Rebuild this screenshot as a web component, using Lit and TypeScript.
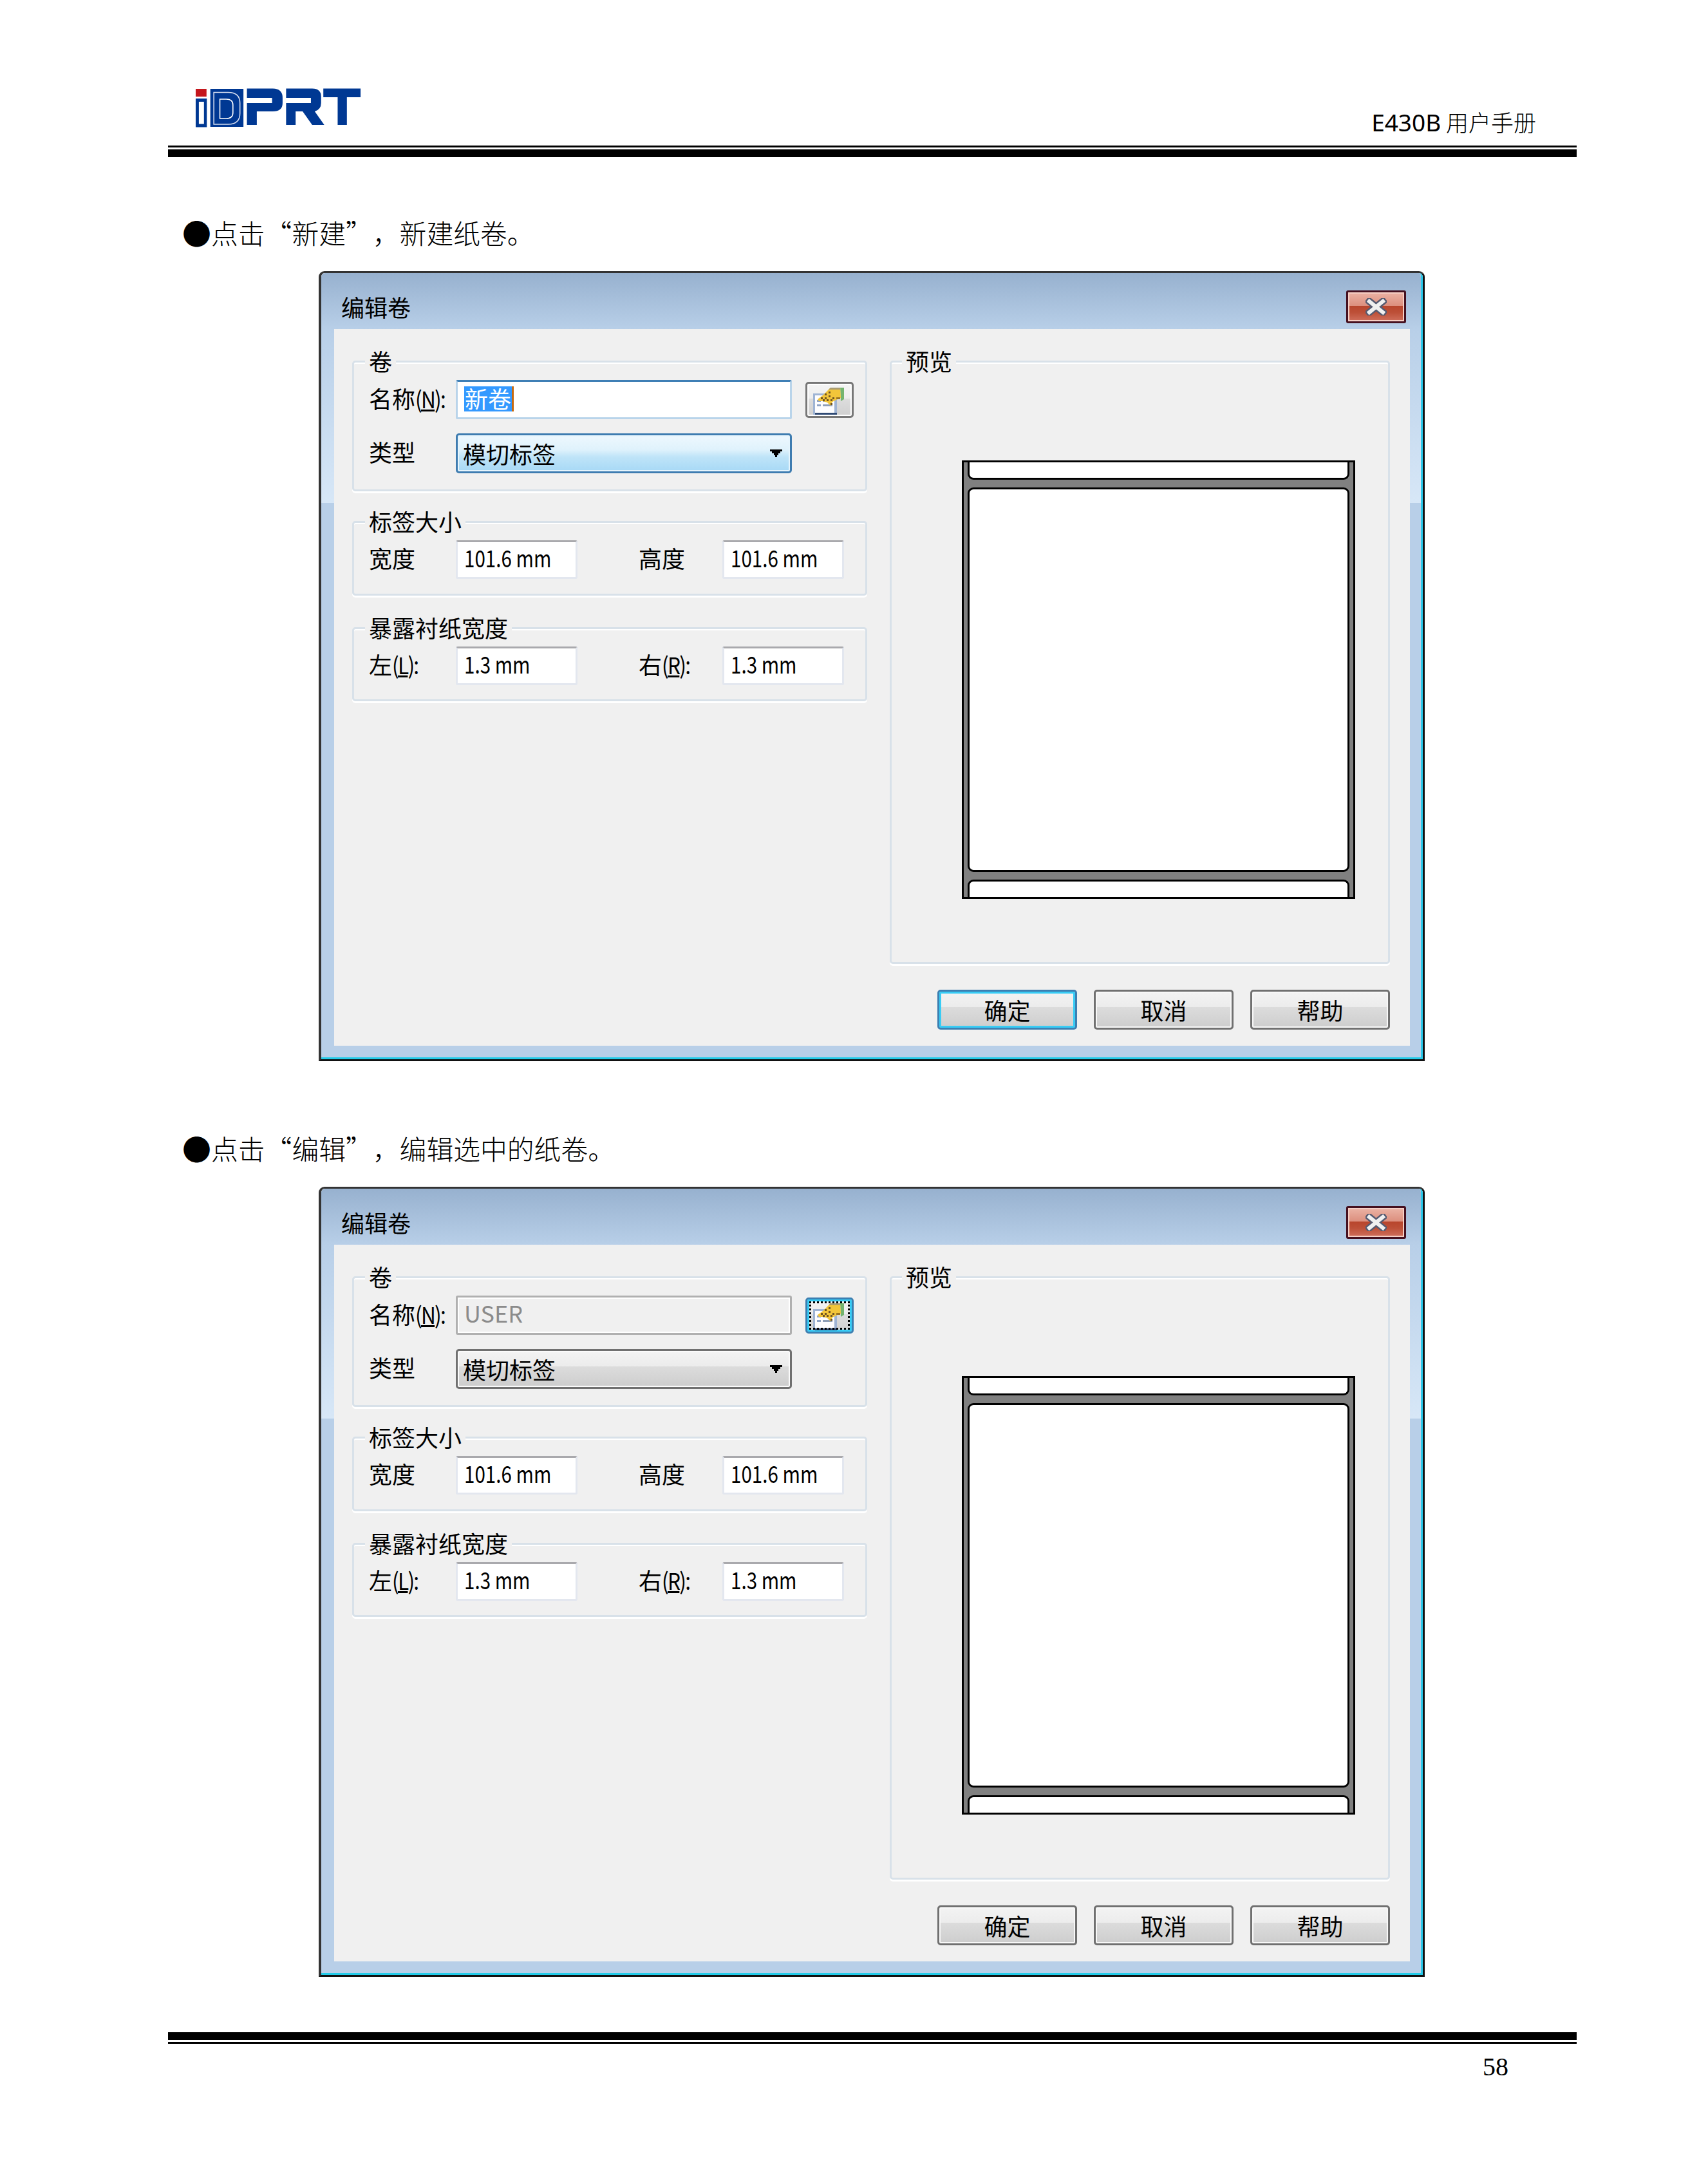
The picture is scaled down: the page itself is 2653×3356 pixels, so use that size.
import { LitElement, html, css, svg } from "lit";
import { customElement, property } from "lit/decorators.js";

const arrow = html`<svg class="arrow" width="19" height="12" viewBox="0 0 19 12"><polygon points="0,0 19,0 19,3 16,3 16,6 13,6 13,9 11,9 11,12 8,12 8,9 6,9 6,6 3,6 3,3 0,3" fill="#000"/></svg>`;

const pickIcon = html`<svg class="pick" width="69" height="50" viewBox="3 3 69 50">
  <rect x="12" y="18" width="37" height="33" fill="#9fb4d4"/>
  <rect x="15" y="21" width="30" height="27" fill="#fdfdff"/>
  <rect x="15" y="48" width="34" height="3" fill="#2f4a74"/>
  <rect x="18" y="28" width="6" height="3" fill="#8fa3c6"/>
  <rect x="27" y="28" width="15" height="3" fill="#8f9fb8"/>
  <rect x="18" y="35" width="6" height="3" fill="#8fa3c6"/>
  <rect x="27" y="35" width="15" height="3" fill="#8f9fb8"/>
  <polygon points="54,9 60,9 60,27 55,30" fill="#74b46f"/>
  <polygon points="19,27 27,21 35,13 39,9 54,9 55,25 48,28 42,31 39,37 34,32 27,30 21,30" fill="#f2c53a"/>
  <polygon points="39,9 54,9 54,12 36,12" fill="#a99c72"/>
  ${[[24,24],[30,18],[36,15],[30,24],[36,21],[27,27],[33,27],[39,27],[39,33],[42,24]].map(([x,y]) => svg`<rect x=${x} y=${y} width="3" height="3" fill="#6f5423"/>`)}
  <rect x="48" y="24" width="6" height="3" fill="#9a7421"/>
</svg>`;

const logo = html`<svg class="logo" width="267" height="75" viewBox="0 0 270 75" preserveAspectRatio="none">
  <rect x="4" y="8" width="17" height="12" fill="#c4161c"/>
  <rect x="4" y="23" width="17.5" height="44.5" fill="#003893"/>
  <rect x="9" y="28" width="8" height="34.5" fill="#fff"/>
  <rect x="27" y="8" width="52" height="59" fill="#003893"/>
  <path d="M32.5 13.5H55Q73.5 13.5 73.5 30V46Q73.5 63 55 63H32.5Z" fill="none" stroke="#d6def0" stroke-width="1.6"/>
  <path d="M42 24H52Q62.5 24 62.5 33V45Q62.5 54 52 54H42Z" fill="none" stroke="#fff" stroke-width="1.6"/>
  <path d="M84.5 7.5H125Q140.5 7.5 140.5 22V30Q140.5 43 125 43H100V64H84.5V30H124V22H84.5Z" fill="#003893"/>
  <path d="M146 7.5H187Q201 7.5 201 20V30Q201 40 191 43L206 64H187L172 43H161V64H146V30H185V22H146Z" fill="#003893"/>
  <path d="M204.5 7.5H263V21H241.5V64H227V21H204.5Z" fill="#003893"/>
</svg>`;

@customElement("roll-dialog")
class RollDialog extends LitElement {
  @property({ type: Boolean }) editing = false;

  static styles = css`
    :host { display: block; width: 1718px; }
    .dialog {
      box-sizing: border-box; width: 1718px; height: 1227px;
      border-style: solid; border-color: #333; border-width: 3px 3px 3px 4px;
      border-right-color: #111; border-bottom-color: #111;
      border-radius: 9px 9px 0 0;
      font: 36px "Noto Sans CJK SC", "Noto Sans", sans-serif; color: #000;
    }
    .frame {
      height: 100%; box-sizing: border-box; display: flex; flex-direction: column;
      border-right: 3px solid #2bc8ea; border-bottom: 3px solid #22cbe8;
      border-radius: 6px 6px 0 0; overflow: hidden;
    }
    .title {
      height: 87px; box-sizing: border-box; padding: 18px 23px 0 31px; flex: none;
      display: flex; align-items: center; justify-content: space-between;
      background: linear-gradient(180deg, #97b1cf, #b8cfe8);
    }
    .title span { margin-top: -2px; }
    .close {
      width: 93px; height: 51px; box-sizing: border-box; border: 3px solid #45101f; border-radius: 3px;
      box-shadow: inset 0 0 0 2px #f6cfc5;
      background: linear-gradient(180deg, #ebb3a5 0, #dc8f7e 46%, #b8452c 47%, #bd5038 70%, #d0705d 100%);
      display: flex; align-items: center; justify-content: center;
    }
    .close svg { display: block; }
    .glass {
      flex: 1; padding: 0 17px 18px 20px; display: flex;
      background: linear-gradient(180deg, #b8cfe8 0, #d7e7f7 270px, #b8cfe8 270px);
    }
    .content {
      flex: 1; background: #f0f0f0; display: flex; flex-direction: column;
      padding: 49px 31px 25px 28px; box-sizing: border-box;
    }
    .main { display: grid; grid-template-columns: 800px 777px; column-gap: 35px; height: 937px; }
    .col { display: flex; flex-direction: column; }
    .group {
      box-sizing: border-box; border: 3px solid #d8e1e9; border-radius: 5px;
      padding: 0 0 23px 23px;
      box-shadow: inset 0 2px 0 #fff, 0 3px 0 #fff;
    }
    .g1 { padding-bottom: 25px; }
    .g2 { margin-top: 46px; }
    .g3 { margin-top: 49px; padding-bottom: 22px; }
    .gr { height: 937px; padding-left: 22px; }
    .legend {
      width: fit-content; height: 36px; padding: 0 6px;
      margin: -19px 0 10px -6px; background: #f0f0f0;
    }
    .legend span { display: block; line-height: 32px; height: 36px; }
    .gr .legend { margin-bottom: 135px; }
    .row { display: flex; align-items: center; }
    .row + .row { margin-top: 22px; }
    .lab { width: 135px; flex: none; white-space: nowrap; line-height: 44px; margin-top: -6px; }
    .pair { display: grid; grid-template-columns: 135px 189px 95px 130px 189px; align-items: center; }
    .pair .lab { width: auto; }
    .narrow { display: inline-block; letter-spacing: -2px; transform: scaleX(.88); transform-origin: left; }
    .field {
      box-sizing: border-box; height: 60px; display: flex; align-items: center; padding-left: 10px;
      background: #fff; border: 3px solid #e3e7ef; border-top-color: #a9a9ad; border-radius: 3px;
      white-space: nowrap; overflow: hidden;
    }
    .cond { display: inline-block; font-size: 37px; transform: scaleX(.8); transform-origin: left; margin-top: -8px; }
    .wide { width: 522px; height: 61px; }
    .wide.focus { border-color: #b9d4ea; border-top-color: #3f7fb5; }
    .wide.off {
      background: #f0f0f0; border-color: #b0b0b0; color: #8b8b8b;
      box-shadow: inset 0 0 0 2px #fff;
    }
    .off span { margin-top: -10px; }
    .sel { background: #3399ff; color: #fff; height: 39px; line-height: 37px; padding: 0 1px; border-right: 3px solid #c86a10; margin-top: -3px; }
    .pickbtn {
      width: 75px; height: 56px; box-sizing: border-box; margin-left: 21px; border: 3px solid #777; border-radius: 5px; flex: none;
      background: linear-gradient(180deg, #f4f4f4 0, #ededed 45%, #dddddd 46%, #d0d0d0 100%);
      box-shadow: inset 0 0 0 2px #fff; position: relative;
    }
    .pickbtn.hot {
      border-color: #3c7fb1; box-shadow: inset 0 0 0 3px #38ccf5;
    }
    .pickbtn.hot::after {
      content: ""; position: absolute; inset: 3px; border: 3px dotted #000;
    }
    .pick { display: block; }
    .combo {
      box-sizing: border-box; width: 522px; height: 62px; display: flex; align-items: center; justify-content: space-between;
      padding: 0 12px 0 8px; border: 3px solid #707070; border-radius: 5px;
      background: linear-gradient(180deg, #f3f3f3 0, #ececec 42%, #dcdcdc 43%, #cdcdcd 100%);
      box-shadow: inset 0 0 0 2px #fbfbfb;
    }
    .combo.focus {
      border-color: #3e7cb0;
      background: linear-gradient(180deg, #eef8fe 0, #dff2fc 40%, #bfe4f8 60%, #a7d9f6 100%);
      box-shadow: inset 0 0 0 2px #e6f5fd;
    }
    .arrow { display: block; }
    .graphic {
      box-sizing: border-box; width: 611px; height: 681px; margin-left: 87px; padding: 0 6px;
      border: 3px solid #000; background: #808080; display: flex; flex-direction: column; gap: 12px;
    }
    .lbl { background: #fff; border: 3px solid #000; box-sizing: border-box; }
    .lbl.top { height: 27px; border-top: 0; border-radius: 0 0 9px 9px; }
    .lbl.big { height: 597px; border-radius: 9px; }
    .lbl.bot { height: 27px; border-bottom: 0; border-radius: 9px 9px 0 0; }
    .buttons { display: flex; justify-content: flex-end; gap: 26px; margin-top: 40px; }
    .btn {
      box-sizing: border-box; width: 217px; height: 62px; border: 3px solid #707070; border-radius: 5px;
      display: flex; align-items: center; justify-content: center;
      background: linear-gradient(180deg, #f3f3f3 0, #ececec 42%, #dcdcdc 43%, #cdcdcd 100%);
      box-shadow: inset 0 0 0 2px #f8f8f8;
    }
    .btn.def { border-color: #3c7fb1; box-shadow: inset 0 0 0 3px #38ccf5; }
  `;

  render() {
    const e = this.editing;
    return html`<div class="dialog"><div class="frame">
      <div class="title"><span>编辑卷</span>
        <div class="close"><svg width="33" height="27" viewBox="0 0 33 27">
          <path d="M6 5L27 22M27 5L6 22" stroke="#555a70" stroke-width="11" stroke-linecap="square" fill="none"/>
          <path d="M6 5L27 22M27 5L6 22" stroke="#f0f0f0" stroke-width="6" stroke-linecap="square" fill="none"/>
        </svg></div>
      </div>
      <div class="glass"><div class="content">
        <div class="main">
          <div class="col">
            <div class="group g1">
              <div class="legend"><span>卷</span></div>
              <div class="row">
                <span class="lab">名称<span class="narrow">(<u>N</u>):</span></span>
                ${e
                  ? html`<div class="field wide off"><span>USER</span></div>`
                  : html`<div class="field wide focus"><span class="sel">新卷</span></div>`}
                <div class="pickbtn ${e ? "hot" : ""}">${pickIcon}</div>
              </div>
              <div class="row">
                <span class="lab">类型</span>
                <div class="combo ${e ? "" : "focus"}"><span>模切标签</span>${arrow}</div>
              </div>
            </div>
            <div class="group g2">
              <div class="legend"><span>标签大小</span></div>
              <div class="pair">
                <span class="lab">宽度</span><div class="field"><span class="cond">101.6 mm</span></div><span></span>
                <span class="lab">高度</span><div class="field"><span class="cond">101.6 mm</span></div>
              </div>
            </div>
            <div class="group g3">
              <div class="legend"><span>暴露衬纸宽度</span></div>
              <div class="pair">
                <span class="lab">左<span class="narrow">(<u>L</u>):</span></span><div class="field"><span class="cond">1.3 mm</span></div><span></span>
                <span class="lab">右<span class="narrow">(<u>R</u>):</span></span><div class="field"><span class="cond">1.3 mm</span></div>
              </div>
            </div>
          </div>
          <div class="group gr">
            <div class="legend"><span>预览</span></div>
            <div class="graphic">
              <div class="lbl top"></div>
              <div class="lbl big"></div>
              <div class="lbl bot"></div>
            </div>
          </div>
        </div>
        <div class="buttons">
          <div class="btn ${e ? "" : "def"}">确定</div>
          <div class="btn">取消</div>
          <div class="btn">帮助</div>
        </div>
      </div></div>
    </div></div>`;
  }
}

@customElement("app-root")
class AppRoot extends LitElement {
  static styles = css`
    :host { display: block; width: 2653px; height: 3356px; background: #fff; overflow: hidden; }
    .page { padding: 0 204px 0 261px; font-family: "Noto Sans CJK SC", "Noto Sans", sans-serif; color: #000; }
    .header { height: 226px; box-sizing: border-box; padding: 130px 63px 0 39px; display: flex; justify-content: space-between; }
    .logo { display: block; }
    .doc { margin-top: 39px; font-size: 35px; line-height: 40px; font-weight: 300; white-space: nowrap; }
    .doc b { font-family: "Noto Sans", sans-serif; font-weight: 400; font-size: 37px; }
    .thin { height: 3px; background: #000; }
    .thick { height: 12px; background: #000; margin-top: 3px; }
    .thick.foot { margin-top: 86px; }
    .thin.foot { margin-top: 3px; }
    .step {
      font-size: 41.8px; line-height: 60px; height: 60px; margin: 87px 0 0 22px; white-space: nowrap; font-weight: 300;
      text-spacing-trim: space-all; font-feature-settings: "chws" 0, "halt" 0;
    }
    .step.second { margin-top: 105px; }
    .bullet { font-size: 45px; line-height: 0; vertical-align: -2px; }
    roll-dialog { margin: 30px 0 0 234px; }
    .num { font: 40px/46px "Liberation Serif", serif; text-align: right; padding-right: 106px; margin-top: 13px; }
  `;

  render() {
    return html`<div class="page">
      <div class="header">${logo}<div class="doc"><b>E430B</b> 用户手册</div></div>
      <div class="thin"></div>
      <div class="thick"></div>
      <div class="step"><span class="bullet">●</span>点击“新建”，新建纸卷。</div>
      <roll-dialog></roll-dialog>
      <div class="step second"><span class="bullet">●</span>点击“编辑”，编辑选中的纸卷。</div>
      <roll-dialog editing></roll-dialog>
      <div class="thick foot"></div>
      <div class="thin foot"></div>
      <div class="num">58</div>
    </div>`;
  }
}
